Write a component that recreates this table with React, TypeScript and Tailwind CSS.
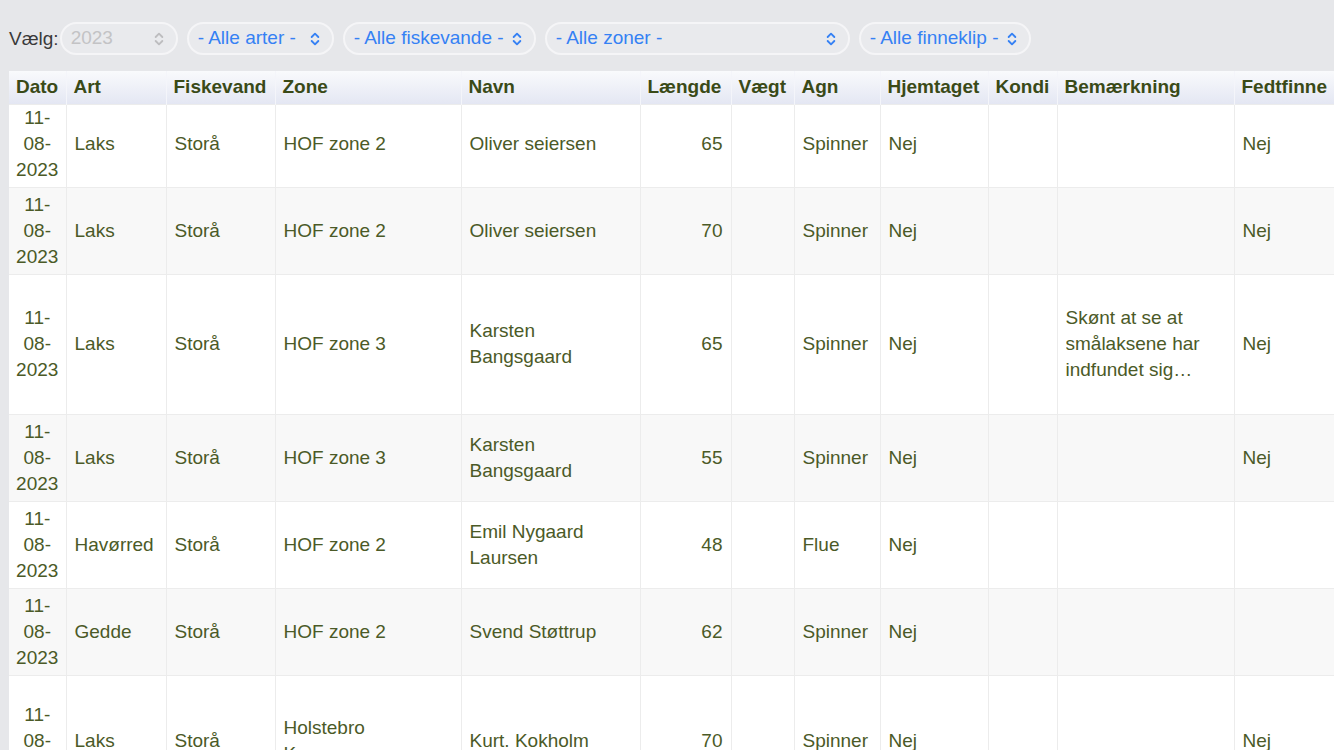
import { ChevronsUpDown } from "lucide-react"

type Row = {
    dato: string
    art: string
    fiskevand: string
    zone: React.ReactNode
    navn: string
    laengde: number
    vaegt: string
    agn: string
    hjemtaget: string
    kondi: string
    bemaerkning: string
    fedtfinne: string
    h: string
}

const rows: Row[] = [
    { dato: "11-08-2023", art: "Laks", fiskevand: "Storå", zone: "HOF zone 2", navn: "Oliver seiersen", laengde: 65, vaegt: "", agn: "Spinner", hjemtaget: "Nej", kondi: "", bemaerkning: "", fedtfinne: "Nej", h: "h-[82px] pb-[4px]" },
    { dato: "11-08-2023", art: "Laks", fiskevand: "Storå", zone: "HOF zone 2", navn: "Oliver seiersen", laengde: 70, vaegt: "", agn: "Spinner", hjemtaget: "Nej", kondi: "", bemaerkning: "", fedtfinne: "Nej", h: "h-[87px]" },
    { dato: "11-08-2023", art: "Laks", fiskevand: "Storå", zone: "HOF zone 3", navn: "Karsten Bangsgaard", laengde: 65, vaegt: "", agn: "Spinner", hjemtaget: "Nej", kondi: "", bemaerkning: "Skønt at se at smålaksene har indfundet sig tilbage i åen", fedtfinne: "Nej", h: "h-[140px]" },
    { dato: "11-08-2023", art: "Laks", fiskevand: "Storå", zone: "HOF zone 3", navn: "Karsten Bangsgaard", laengde: 55, vaegt: "", agn: "Spinner", hjemtaget: "Nej", kondi: "", bemaerkning: "", fedtfinne: "Nej", h: "h-[87px]" },
    { dato: "11-08-2023", art: "Havørred", fiskevand: "Storå", zone: "HOF zone 2", navn: "Emil Nygaard Laursen", laengde: 48, vaegt: "", agn: "Flue", hjemtaget: "Nej", kondi: "", bemaerkning: "", fedtfinne: "", h: "h-[87px]" },
    { dato: "11-08-2023", art: "Gedde", fiskevand: "Storå", zone: "HOF zone 2", navn: "Svend Støttrup", laengde: 62, vaegt: "", agn: "Spinner", hjemtaget: "Nej", kondi: "", bemaerkning: "", fedtfinne: "", h: "h-[87px]" },
    { dato: "11-08-2023", art: "Laks", fiskevand: "Storå", zone: <>Holstebro<br />Kommune</>, navn: "Kurt. Kokholm", laengde: 70, vaegt: "", agn: "Spinner", hjemtaget: "Nej", kondi: "", bemaerkning: "", fedtfinne: "Nej", h: "h-[132px]" },
]

const Filter = ({ label, width, muted }: { label: string; width: string; muted?: boolean }) => (
    <div className={`${width} h-[33px] rounded-full border-2 border-[#f5f5f7] bg-[#e9eaed] flex items-center justify-between pl-[9px] pr-[9px]`}>
        <span className={muted ? "text-[#c3c3c5]" : "text-[#3581f4]"}>{label}</span>
        <ChevronsUpDown size={16} strokeWidth={2.8} className={muted ? "text-[#bdbdbf]" : "text-[#3581f4]"} />
    </div>
)

const headers = ["Dato", "Art", "Fiskevand", "Zone", "Navn", "Længde", "Vægt", "Agn", "Hjemtaget", "Kondi", "Bemærkning", "Fedtfinne"]
const widths = ["w-[57px]", "w-[100px]", "w-[109px]", "w-[186px]", "w-[179px]", "w-[91px]", "w-[63px]", "w-[86px]", "w-[108px]", "w-[69px]", "w-[177px]", "w-[110px]"]

export default function App() {
    return (
        <div className="w-[1334px] h-[750px] overflow-hidden bg-[#e6e7ea] font-['Liberation_Sans',Arial,sans-serif] text-[19px]">
            <div className="flex gap-[9px] pl-[9px] pt-[22px] h-[71px] items-start">
                <div className="flex items-center gap-[1px]">
                    <span className="text-[#3a3a3a] leading-[33px]">Vælg:</span>
                    <Filter label="2023" width="w-[118px]" muted />
                </div>
                <Filter label="- Alle arter -" width="w-[147px]" />
                <Filter label="- Alle fiskevande -" width="w-[193px]" />
                <Filter label="- Alle zoner -" width="w-[305px]" />
                <Filter label="- Alle finneklip -" width="w-[172px]" />
            </div>

            <div className="pl-[9px]">
                <table className="table-fixed border-collapse w-[1335px] leading-[26px]">
                    <colgroup>
                        {widths.map((w, i) => (
                            <col key={i} className={w} />
                        ))}
                    </colgroup>
                    <thead>
                        <tr className="h-[33px] bg-gradient-to-b from-[#f9fafc] to-[#e4e7f3]">
                            {headers.map((h) => (
                                <th key={h} className="px-[7px] text-left font-bold text-[#3a4a17] border-r border-[#f4f5fa] whitespace-nowrap">
                                    {h}
                                </th>
                            ))}
                        </tr>
                    </thead>
                    <tbody className="text-[#4b5a27]">
                        {rows.map((r, i) => (
                            <tr key={i} className={`${r.h} ${i % 2 === 1 ? "bg-[#f8f8f8]" : "bg-white"}`}>
                                <td className={`${r.h} px-[7px] text-center border border-[#ececec] border-l-0`}>{r.dato}</td>
                                <td className={`${r.h} px-2 border border-[#ececec]`}>{r.art}</td>
                                <td className={`${r.h} px-2 border border-[#ececec]`}>{r.fiskevand}</td>
                                <td className={`${r.h} px-2 border border-[#ececec]`}>{r.zone}</td>
                                <td className={`${r.h} px-2 border border-[#ececec]`}>{r.navn}</td>
                                <td className={`${r.h} px-2 text-right border border-[#ececec]`}>{r.laengde}</td>
                                <td className={`${r.h} px-2 border border-[#ececec]`}>{r.vaegt}</td>
                                <td className={`${r.h} px-2 border border-[#ececec]`}>{r.agn}</td>
                                <td className={`${r.h} px-2 border border-[#ececec]`}>{r.hjemtaget}</td>
                                <td className={`${r.h} px-2 border border-[#ececec]`}>{r.kondi}</td>
                                <td className={`${r.h} px-2 border border-[#ececec]`}>
                                    <div className="line-clamp-3">{r.bemaerkning}</div>
                                </td>
                                <td className={`${r.h} px-2 border border-[#ececec]`}>{r.fedtfinne}</td>
                            </tr>
                        ))}
                    </tbody>
                </table>
            </div>
        </div>
    )
}
